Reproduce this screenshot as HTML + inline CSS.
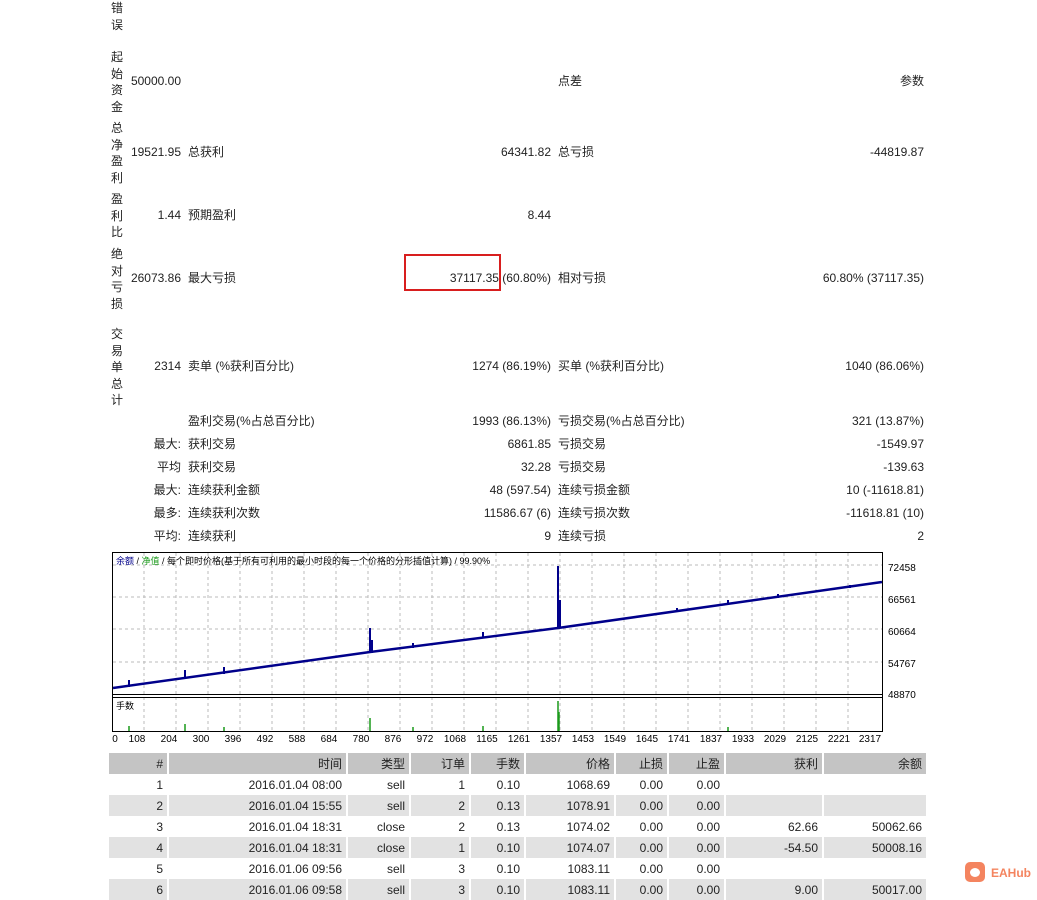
<!DOCTYPE html>
<html><head><meta charset="utf-8"><style>
body{margin:0;width:1037px;height:888px;background:#fff;position:relative;overflow:hidden;font-family:"Liberation Sans","Noto Sans CJK SC",sans-serif;font-size:12px;color:#222}
.a{position:absolute;white-space:nowrap;line-height:14px}
.r{text-align:right}
.v{position:absolute;left:111px;width:13px;font-size:12px;line-height:16.5px;white-space:normal}
table{position:absolute;left:109px;top:753px;border-collapse:collapse;font-size:12px;table-layout:fixed;width:818px}
td{height:21px;padding:0 4px;text-align:right;border-right:2px solid #fff;box-sizing:border-box;overflow:hidden;white-space:nowrap}
tr.h td{background:#c4c4c4}
tr.g td{background:#e2e2e2}
</style></head><body>
<div class="v" style="top:0px">错误</div>
<div class="v" style="top:49px">起始资金</div>
<div class="v" style="top:120px">总净盈利</div>
<div class="v" style="top:191px">盈利比</div>
<div class="v" style="top:246px">绝对亏损</div>
<div class="v" style="top:326px">交易单总计</div>

<div class="a r" style="right:856px;top:74px">50000.00</div>
<div class="a" style="left:558px;top:74px">点差</div>
<div class="a r" style="right:113px;top:74px">参数</div>

<div class="a r" style="right:856px;top:145px">19521.95</div>
<div class="a" style="left:188px;top:145px">总获利</div>
<div class="a r" style="right:486px;top:145px">64341.82</div>
<div class="a" style="left:558px;top:145px">总亏损</div>
<div class="a r" style="right:113px;top:145px">-44819.87</div>

<div class="a r" style="right:856px;top:208px">1.44</div>
<div class="a" style="left:188px;top:208px">预期盈利</div>
<div class="a r" style="right:486px;top:208px">8.44</div>

<div class="a r" style="right:856px;top:271px">26073.86</div>
<div class="a" style="left:188px;top:271px">最大亏损</div>
<div class="a r" style="right:486px;top:271px">37117.35 (60.80%)</div>
<div class="a" style="left:558px;top:271px">相对亏损</div>
<div class="a r" style="right:113px;top:271px">60.80% (37117.35)</div>
<div style="position:absolute;left:404px;top:254px;width:93px;height:33px;border:2px solid #d81e1e"></div>

<div class="a r" style="right:856px;top:359px">2314</div>
<div class="a" style="left:188px;top:359px">卖单 (%获利百分比)</div>
<div class="a r" style="right:486px;top:359px">1274 (86.19%)</div>
<div class="a" style="left:558px;top:359px">买单 (%获利百分比)</div>
<div class="a r" style="right:113px;top:359px">1040 (86.06%)</div>

<div class="a" style="left:188px;top:414px">盈利交易(%占总百分比)</div>
<div class="a r" style="right:486px;top:414px">1993 (86.13%)</div>
<div class="a" style="left:558px;top:414px">亏损交易(%占总百分比)</div>
<div class="a r" style="right:113px;top:414px">321 (13.87%)</div>

<div class="a r" style="right:856px;top:437px">最大:</div>
<div class="a" style="left:188px;top:437px">获利交易</div>
<div class="a r" style="right:486px;top:437px">6861.85</div>
<div class="a" style="left:558px;top:437px">亏损交易</div>
<div class="a r" style="right:113px;top:437px">-1549.97</div>

<div class="a r" style="right:856px;top:460px">平均</div>
<div class="a" style="left:188px;top:460px">获利交易</div>
<div class="a r" style="right:486px;top:460px">32.28</div>
<div class="a" style="left:558px;top:460px">亏损交易</div>
<div class="a r" style="right:113px;top:460px">-139.63</div>

<div class="a r" style="right:856px;top:483px">最大:</div>
<div class="a" style="left:188px;top:483px">连续获利金额</div>
<div class="a r" style="right:486px;top:483px">48 (597.54)</div>
<div class="a" style="left:558px;top:483px">连续亏损金额</div>
<div class="a r" style="right:113px;top:483px">10 (-11618.81)</div>

<div class="a r" style="right:856px;top:506px">最多:</div>
<div class="a" style="left:188px;top:506px">连续获利次数</div>
<div class="a r" style="right:486px;top:506px">11586.67 (6)</div>
<div class="a" style="left:558px;top:506px">连续亏损次数</div>
<div class="a r" style="right:113px;top:506px">-11618.81 (10)</div>

<div class="a r" style="right:856px;top:529px">平均:</div>
<div class="a" style="left:188px;top:529px">连续获利</div>
<div class="a r" style="right:486px;top:529px">9</div>
<div class="a" style="left:558px;top:529px">连续亏损</div>
<div class="a r" style="right:113px;top:529px">2</div>

<svg style="position:absolute;left:0;top:0" width="1037" height="750">
<g stroke="#bbb" stroke-dasharray="3,3" stroke-width="1">
<path d="M144 553V731M176 553V731M208 553V731M240 553V731M272 553V731M304 553V731M336 553V731M368 553V731M400 553V731M432 553V731M464 553V731M496 553V731M528 553V731M560 553V731M592 553V731M624 553V731M656 553V731M688 553V731M720 553V731M752 553V731M784 553V731M816 553V731M848 553V731"/>
<path d="M113 565H882M113 597H882M113 629H882M113 662H882"/>
</g>
<rect x="112.5" y="552.5" width="770" height="179" fill="none" stroke="#000"/>
<path d="M112 694.5H883M112 697.5H883" stroke="#000"/>
<path d="M113 688 L370 652 L558 628 L882 582" stroke="#00008b" stroke-width="2.5" fill="none"/>
<g stroke="#00008b" stroke-width="2">
<path d="M129 687V680M185 679V670M224 674V667M370 653V628M372 653V640M413 648V643M483 638V632M558 628V566M560 628V600M677 612V608M728 605V600M778 598V594M850 588V585"/>
</g>
<g stroke="#1a9a1a" stroke-width="1.5">
<path d="M129 731V726M185 731V724M224 731V727M370 731V718M558 731V701M559 731V712M483 731V726M413 731V727M728 731V727"/>
</g>
<text x="116" y="564" font-size="9" fill="#000" font-family="Liberation Sans,Noto Sans CJK SC,sans-serif"><tspan fill="#00008b">余额</tspan> / <tspan fill="#1a9a1a">净值</tspan> / 每个即时价格(基于所有可利用的最小时段的每一个价格的分形插值计算) / 99.90%</text>
<text x="116" y="709" font-size="9" fill="#000" font-family="Liberation Sans,Noto Sans CJK SC,sans-serif">手数</text>
<g font-size="10" fill="#000" font-family="Liberation Sans,sans-serif">
<text x="888" y="571">72458</text><text x="888" y="603">66561</text><text x="888" y="635">60664</text><text x="888" y="667">54767</text><text x="888" y="698">48870</text>
</g>
<g font-size="10" fill="#000" font-family="Liberation Sans,sans-serif" text-anchor="middle">
<text x="115" y="742">0</text><text x="137" y="742">108</text><text x="169" y="742">204</text><text x="201" y="742">300</text><text x="233" y="742">396</text><text x="265" y="742">492</text><text x="297" y="742">588</text><text x="329" y="742">684</text><text x="361" y="742">780</text><text x="393" y="742">876</text><text x="425" y="742">972</text><text x="455" y="742">1068</text><text x="487" y="742">1165</text><text x="519" y="742">1261</text><text x="551" y="742">1357</text><text x="583" y="742">1453</text><text x="615" y="742">1549</text><text x="647" y="742">1645</text><text x="679" y="742">1741</text><text x="711" y="742">1837</text><text x="743" y="742">1933</text><text x="775" y="742">2029</text><text x="807" y="742">2125</text><text x="839" y="742">2221</text><text x="870" y="742">2317</text>
</g>
</svg>

<table>
<colgroup><col style="width:59px"><col style="width:179px"><col style="width:63px"><col style="width:60px"><col style="width:55px"><col style="width:90px"><col style="width:53px"><col style="width:57px"><col style="width:98px"><col style="width:104px"></colgroup>
<tr class="h"><td>#</td><td>时间</td><td>类型</td><td>订单</td><td>手数</td><td>价格</td><td>止损</td><td>止盈</td><td>获利</td><td>余额</td></tr>
<tr><td>1</td><td>2016.01.04 08:00</td><td>sell</td><td>1</td><td>0.10</td><td>1068.69</td><td>0.00</td><td>0.00</td><td></td><td></td></tr>
<tr class="g"><td>2</td><td>2016.01.04 15:55</td><td>sell</td><td>2</td><td>0.13</td><td>1078.91</td><td>0.00</td><td>0.00</td><td></td><td></td></tr>
<tr><td>3</td><td>2016.01.04 18:31</td><td>close</td><td>2</td><td>0.13</td><td>1074.02</td><td>0.00</td><td>0.00</td><td>62.66</td><td>50062.66</td></tr>
<tr class="g"><td>4</td><td>2016.01.04 18:31</td><td>close</td><td>1</td><td>0.10</td><td>1074.07</td><td>0.00</td><td>0.00</td><td>-54.50</td><td>50008.16</td></tr>
<tr><td>5</td><td>2016.01.06 09:56</td><td>sell</td><td>3</td><td>0.10</td><td>1083.11</td><td>0.00</td><td>0.00</td><td></td><td></td></tr>
<tr class="g"><td>6</td><td>2016.01.06 09:58</td><td>sell</td><td>3</td><td>0.10</td><td>1083.11</td><td>0.00</td><td>0.00</td><td>9.00</td><td>50017.00</td></tr>
</table>

<div style="position:absolute;left:965px;top:862px;width:20px;height:20px;border-radius:5px;background:#f4845f"></div>
<div style="position:absolute;left:970px;top:868px;width:10px;height:9px;border-radius:50%;background:#fff"></div>
<div class="a" style="left:991px;top:866px;color:#f4845f;font-weight:bold;font-size:12px">EAHub</div>
</body></html>
